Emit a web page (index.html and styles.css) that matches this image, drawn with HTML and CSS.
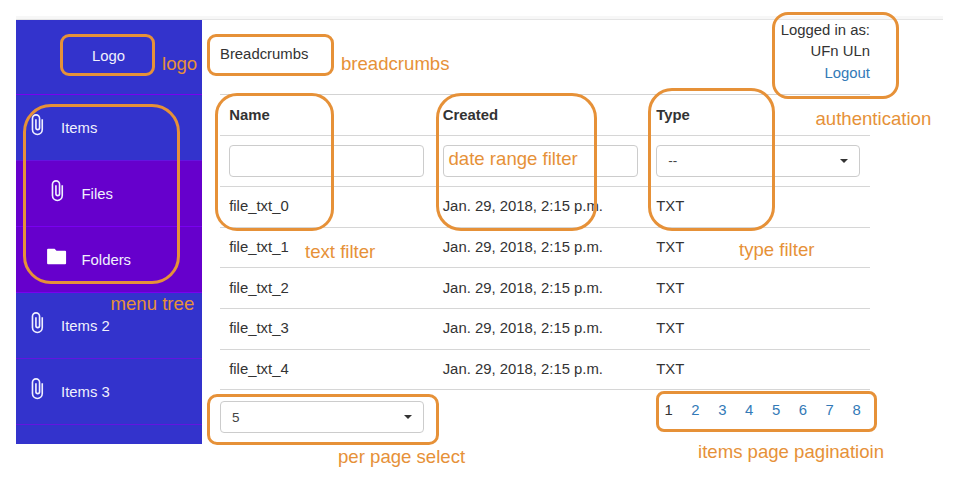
FILE: index.html
```html
<!DOCTYPE html>
<html lang="en">
<head>
<meta charset="utf-8">
<title>Items</title>
<link rel="stylesheet" href="styles.css">
</head>
<body>
<svg class="defs" aria-hidden="true">
  <symbol id="clip" viewBox="0 0 24 24"><path fill="none" stroke="#f0f0ff" stroke-width="1.7" d="M18 6.500V17.300a5.100 5.100 0 0 1-10.200 0V5.600a3.700 3.700 0 0 1 7.400 0V15.500a1.900 1.900 0 0 1-3.800 0V6.500"/></symbol>
  <symbol id="folder" viewBox="0 0 24 24"><path d="M10 4H3.200Q2.200 4 2.200 5V19Q2.200 20 3.200 20H21Q22 20 22 19V7Q22 6 21 6H12z"/></symbol>
</svg>
<div class="topline"></div>
<div class="app">
  <nav class="sidebar">
    <div class="brand">Logo</div>
    <a class="item"><svg class="icon"><use href="#clip"/></svg><span>Items</span></a>
    <a class="item sub"><svg class="icon"><use href="#clip"/></svg><span>Files</span></a>
    <a class="item sub"><svg class="icon"><use href="#folder"/></svg><span>Folders</span></a>
    <a class="item"><svg class="icon"><use href="#clip"/></svg><span>Items 2</span></a>
    <a class="item"><svg class="icon"><use href="#clip"/></svg><span>Items 3</span></a>
  </nav>
  <main class="content">
    <header class="header">
      <div class="crumbs">Breadcrumbs</div>
      <div class="auth">Logged in as:<br>UFn ULn<br><a class="link">Logout</a></div>
    </header>
    <div class="table">
      <div class="row head"><span>Name</span><span>Created</span><span>Type</span></div>
      <div class="row filters">
        <div class="control"></div><div class="control"></div>
        <div class="control select"><span>--</span><i class="caret"></i></div>
      </div>
      <div class="row"><span>file_txt_0</span><span>Jan. 29, 2018, 2:15 p.m.</span><span>TXT</span></div>
      <div class="row"><span>file_txt_1</span><span>Jan. 29, 2018, 2:15 p.m.</span><span>TXT</span></div>
      <div class="row"><span>file_txt_2</span><span>Jan. 29, 2018, 2:15 p.m.</span><span>TXT</span></div>
      <div class="row"><span>file_txt_3</span><span>Jan. 29, 2018, 2:15 p.m.</span><span>TXT</span></div>
      <div class="row"><span>file_txt_4</span><span>Jan. 29, 2018, 2:15 p.m.</span><span>TXT</span></div>
    </div>
    <footer class="footer">
      <div class="control select per-page"><span>5</span><i class="caret"></i></div>
      <div class="pages"><span>1</span><a class="link">2</a><a class="link">3</a><a class="link">4</a><a class="link">5</a><a class="link">6</a><a class="link">7</a><a class="link">8</a></div>
    </footer>
  </main>
</div>
<div class="box box-logo"></div><div class="note note-logo">logo</div>
<div class="box box-crumbs"></div><div class="note note-crumbs">breadcrumbs</div>
<div class="box box-menu"></div><div class="note note-menu">menu tree</div>
<div class="box box-name"></div><div class="note note-name">text filter</div>
<div class="box box-created"></div><div class="note note-created">date range filter</div>
<div class="box box-type"></div><div class="note note-type">type filter</div>
<div class="box box-auth"></div><div class="note note-auth">authentication</div>
<div class="box box-per"></div><div class="note note-per">per page select</div>
<div class="box box-pages"></div><div class="note note-pages">items page paginatioin</div>
</body>
</html>
```
FILE: styles.css
```css
* { box-sizing: border-box; }
body {
  margin: 0;
  height: 491px;
  position: relative;
  overflow: hidden;
  background: #fff;
  color: #333;
  font: 14.87px/21.3px "Liberation Sans", Arial, sans-serif;
}
.defs { position: absolute; width: 0; height: 0; }
.topline {
  height: 4px;
  margin: 16px 20px 0 16px;
  background: #f7f7f7;
  border-bottom: 1px solid #e4e4e4;
}
.app { display: flex; height: 424px; margin-left: 16px; }
.sidebar {
  width: 185.5px;
  background: #3333cc;
  color: #f0f0fc;
}
.brand {
  height: 75px;
  padding: 26px 0 0 76px;
  border-bottom: 1px solid #7a00f0;
}
.item {
  display: flex;
  height: 66px;
  padding: 18px 0 0 8.5px;
  border-bottom: 1px solid #6414e0;
}
.item span { padding: 4.5px 0 0 13.5px; }
.item.sub { padding-left: 29px; background: #6600cc; border-color: #7a00f0; }
.icon { width: 23px; height: 23px; fill: #fff; }
.content { width: 650px; margin-left: 18.5px; }
.header { display: flex; justify-content: space-between; height: 74px; }
.crumbs { padding-top: 24px; }
.auth { text-align: right; }
.link { color: #337ab7; }
.table { border-top: 1px solid #d3d3d3; }
.row {
  display: grid;
  grid-template-columns: 213.5px 213.5px 223px;
  align-items: center;
  height: 40.7px;
  padding-left: 9.2px;
  border-bottom: 1px solid #d6d6d6;
}
.head { height: 41px; padding-top: 1px; font-weight: bold; }
.filters { height: 51px; }
.control {
  width: 195px;
  height: 32px;
  border: 1px solid #ccc;
  border-radius: 4px;
  background: #fff;
}
.select {
  display: flex;
  align-items: center;
  justify-content: space-between;
  padding: 0 11px;
  font-size: 13.5px;
  color: #444;
}
.row .select { width: 204px; }
.caret {
  border: 4px solid transparent;
  border-top-color: #333;
  border-bottom: 0;
}
.footer { display: flex; justify-content: space-between; padding-top: 11px; }
.per-page { width: 204px; }
.pages { display: flex; width: 205.5px; margin-top: -1px; }
.pages > * { flex: none; width: 26.85px; }

/* annotation layer over the interface */
.box { position: absolute; border: 3px solid #e69138; }
.box-logo { left: 60px; top: 34px; width: 95px; height: 42px; border-radius: 9px; }
.box-crumbs { left: 207px; top: 34px; width: 127px; height: 42px; border-radius: 9px; }
.box-menu { left: 23px; top: 104px; width: 157px; height: 180px; border-radius: 28px; }
.box-name { left: 215px; top: 93px; width: 119px; height: 138px; border-radius: 22px; }
.box-created { left: 436px; top: 93px; width: 161px; height: 138px; border-radius: 25px; }
.box-type { left: 648px; top: 88px; width: 127px; height: 143px; border-radius: 24px; }
.box-auth { left: 772px; top: 12px; width: 127px; height: 87px; border-radius: 16px; }
.box-per { left: 207px; top: 394px; width: 232px; height: 51px; border-radius: 10px; }
.box-pages { left: 656px; top: 391px; width: 221px; height: 41px; border-radius: 8px; }
.note {
  position: absolute;
  color: #e69138;
  font-size: 18.6px;
  line-height: 20px;
  white-space: nowrap;
}
.note-logo { left: 162px; top: 53.5px; }
.note-crumbs { left: 341px; top: 53.5px; }
.note-menu { left: 110.5px; top: 293.5px; }
.note-name { left: 305px; top: 242px; }
.note-created { left: 448.5px; top: 148.5px; }
.note-type { left: 739px; top: 240px; }
.note-auth { left: 815.5px; top: 108.5px; }
.note-per { left: 338px; top: 447px; }
.note-pages { left: 698px; top: 442px; }
```
